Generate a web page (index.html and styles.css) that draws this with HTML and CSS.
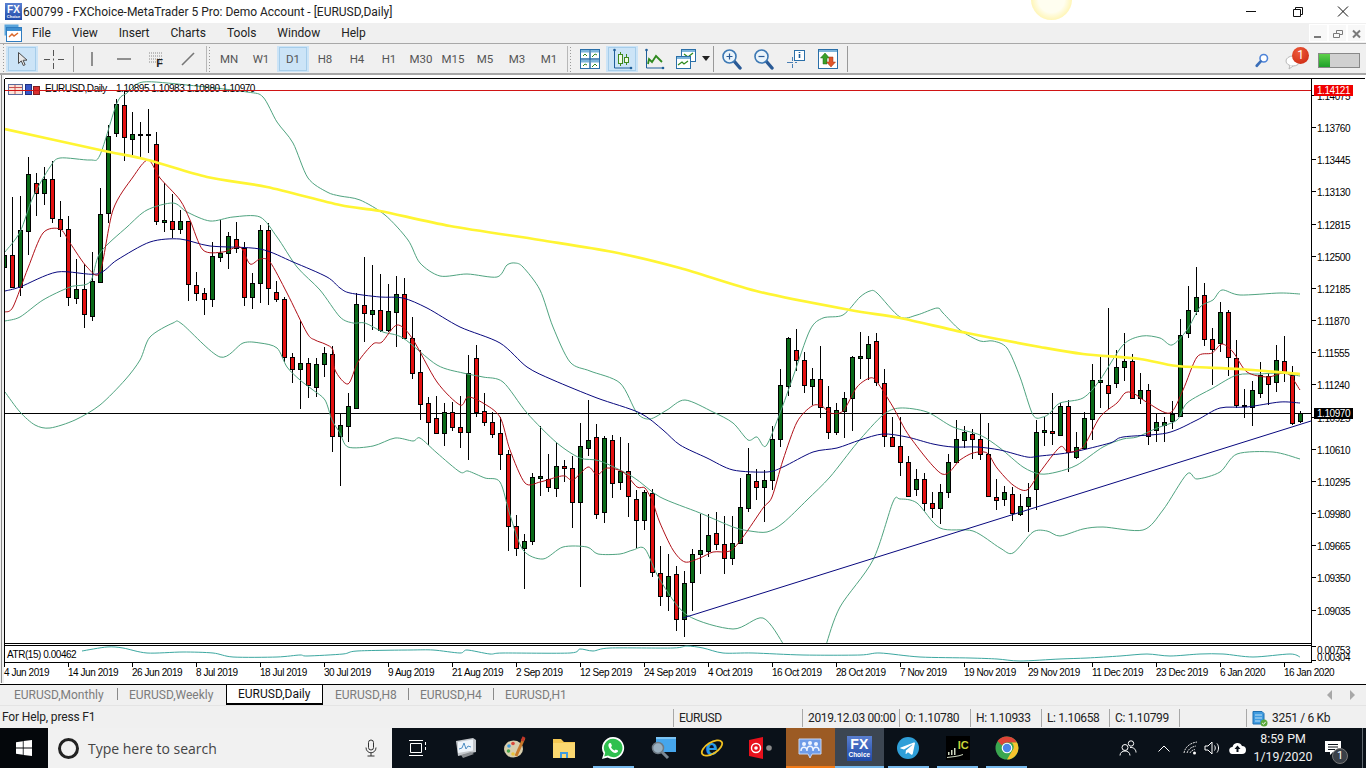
FILE: index.html
```html
<!DOCTYPE html>
<html lang="en">
<head>
<meta charset="utf-8">
<title>600799 - FXChoice-MetaTrader 5 Pro: Demo Account - [EURUSD,Daily]</title>
<link rel="stylesheet" href="styles.css">
</head>
<body>
<div class="app">
  <header class="titlebar">
    <span class="fx-badge small"><b>FX</b><i>Choice</i></span>
    <span class="title">600799 - FXChoice-MetaTrader 5 Pro: Demo Account - [EURUSD,Daily]</span>
    <span class="sun"></span>
    <div class="winctl">
      <svg width="46" height="22" viewBox="0 0 46 22"><path d="M18 10.500h10" stroke="#111" fill="none"/></svg>
      <svg width="46" height="22" viewBox="0 0 46 22"><path d="M19.500 8.500h7v7h-7zM21.500 8.500v-2h7v7h-2" stroke="#111" fill="none"/></svg>
      <svg width="46" height="22" viewBox="0 0 46 22"><path d="M18 5.500l10 10M28 5.500l-10 10" stroke="#111" fill="none"/></svg>
    </div>
  </header>

  <nav class="menubar">
    <svg class="appicon" width="18" height="18" viewBox="0 0 18 18"><rect x="0.5" y="0.5" width="14" height="11" fill="#5aa5dc"/><rect x="2.5" y="3.5" width="15" height="14" fill="#fff" stroke="#2f7cc0"/><rect x="3" y="4" width="14" height="3" fill="#3f8fd0"/><path d="M5 13l3-3 2 2 4-3" stroke="#d9672a" stroke-width="1.4" fill="none"/></svg>
    <span>File</span><span>View</span><span>Insert</span><span>Charts</span><span>Tools</span><span>Window</span><span>Help</span>
    <div class="mdi">
      <span class="mdibtn"><svg width="19" height="17" viewBox="0 0 19 17"><path d="M5 12h7" stroke="#7a7a7a" stroke-width="2"/></svg></span>
      <span class="mdibtn"><svg width="19" height="17" viewBox="0 0 19 17"><path d="M5.500 8.500h6v4h-6zM8.500 8V5.500h6v4h-2.500" stroke="#7a7a7a" fill="none"/></svg></span>
      <span class="mdibtn"><svg width="19" height="17" viewBox="0 0 19 17"><path d="M6 5.500l7 7M13 5.500l-7 7" stroke="#7a7a7a" stroke-width="2"/></svg></span>
    </div>
  </nav>

  <div class="toolbar">
    <button class="tbtn on"><svg width="16" height="18" viewBox="0 0 16 18"><path d="M4.500 2.500v11l2.800-2.600 2 4.600 1.800-.8-2-4.400 3.900-.2z" fill="#e8e8e8" stroke="#4a4a4a"/></svg></button>
    <button class="tbtn"><svg width="22" height="22" viewBox="0 0 22 22"><path d="M1 11.500h6M15 11.500h6M10.500 2v6M10.500 15v6M10.500 10.500v2" stroke="#555" fill="none"/></svg></button>
    <span class="sep"></span>
    <button class="tbtn"><svg width="6" height="16" viewBox="0 0 6 16"><path d="M3 1v14" stroke="#777" stroke-width="1.600"/></svg></button>
    <button class="tbtn"><svg width="16" height="6" viewBox="0 0 16 6"><path d="M1 3h14" stroke="#777" stroke-width="1.600"/></svg></button>
    <button class="tbtn grid-f"><svg width="14" height="11" viewBox="0 0 14 11"><path d="M0 1h14M0 4h14M0 7h14M0 10h14" stroke="#888" stroke-dasharray="1 1"/></svg><b>F</b></button>
    <button class="tbtn"><svg width="14" height="14" viewBox="0 0 14 14"><path d="M1 13L13 1" stroke="#777" stroke-width="1.600"/></svg></button>
    <span class="grip"></span>
    <button class="tbtn tf">MN</button><button class="tbtn tf">W1</button><button class="tbtn tf on">D1</button><button class="tbtn tf">H8</button><button class="tbtn tf">H4</button><button class="tbtn tf">H1</button><button class="tbtn tf">M30</button><button class="tbtn tf">M15</button><button class="tbtn tf">M5</button><button class="tbtn tf">M3</button><button class="tbtn tf">M1</button>
    <span class="grip"></span>
    <button class="tbtn"><svg width="20" height="20" viewBox="0 0 20 20"><rect x="0.500" y="0.500" width="19" height="19" fill="#fff" stroke="#2a6fa8"/><path d="M0 10h20M10 0v20" stroke="#2a6fa8" stroke-width="1.500"/><rect x="1" y="1" width="8" height="2.500" fill="#7fb6dc"/><rect x="11" y="1" width="8" height="2.500" fill="#7fb6dc"/><rect x="1" y="11" width="8" height="2.500" fill="#7fb6dc"/><rect x="11" y="11" width="8" height="2.500" fill="#7fb6dc"/><path d="M3 7l2-2 2 2M12 8l3-3 2 1M3 17l2-2 2 1M12 18l3-3 2 2" stroke="#2f8a1f" fill="none"/></svg></button>
    <button class="tbtn on"><svg width="22" height="24" viewBox="0 0 22 24"><path d="M3.500 3v18H20" stroke="#1f5f9a" fill="none"/><circle cx="3.500" cy="3" r="1.300" fill="#1f5f9a"/><circle cx="20" cy="21" r="1.300" fill="#1f5f9a"/><path d="M9.500 5v14M15.500 7v11" stroke="#3f8a1f"/><rect x="7.500" y="7.500" width="4" height="9" fill="#f4fbe8" stroke="#3f8a1f"/><rect x="13.500" y="10.500" width="4" height="5" fill="#f4fbe8" stroke="#3f8a1f"/></svg></button>
    <button class="tbtn"><svg width="22" height="24" viewBox="0 0 22 24"><path d="M3.500 3v18H20" stroke="#1f5f9a" fill="none"/><circle cx="3.500" cy="3" r="1.300" fill="#1f5f9a"/><circle cx="20" cy="21" r="1.300" fill="#1f5f9a"/><path d="M5 17l1-5 3 3 4-6 6 6" stroke="#2f8a1f" stroke-width="1.800" fill="none"/></svg></button>
    <button class="tbtn"><svg width="22" height="22" viewBox="0 0 22 22"><rect x="6.500" y="1.500" width="14" height="12" fill="#fff" stroke="#2a6fa8"/><rect x="7" y="2" width="13" height="2" fill="#7fb6dc"/><path d="M9 6l4 3 5-4" stroke="#2f8a1f" stroke-width="1.300" fill="none"/><rect x="1.500" y="8.500" width="14" height="12" fill="#fff" stroke="#2a6fa8"/><rect x="2" y="9" width="13" height="2" fill="#7fb6dc"/><path d="M3 17l4-3 2 2 4-3" stroke="#2f8a1f" stroke-width="1.300" fill="none"/></svg></button>
    <span class="dropdown"><svg width="8" height="5" viewBox="0 0 8 5"><path d="M0 0h8L4 5z" fill="#222"/></svg></span>
    <span class="sep"></span>
    <button class="tbtn"><svg width="22" height="22" viewBox="0 0 22 22"><path d="M13 13l6 7" stroke="#2a5a96" stroke-width="3.400" stroke-linecap="round"/><circle cx="8.500" cy="8.500" r="6.500" fill="#eaf4fb" stroke="#3c78b4" stroke-width="1.600"/><path d="M5.500 8.500h6M8.500 5.500v6" stroke="#2a5a96" stroke-width="1.200"/></svg></button>
    <button class="tbtn"><svg width="22" height="22" viewBox="0 0 22 22"><path d="M13 13l6 7" stroke="#2a5a96" stroke-width="3.400" stroke-linecap="round"/><circle cx="8.500" cy="8.500" r="6.500" fill="#eaf4fb" stroke="#3c78b4" stroke-width="1.600"/><path d="M5.500 8.500h6" stroke="#2a5a96" stroke-width="1.200"/></svg></button>
    <button class="tbtn"><svg width="20" height="20" viewBox="0 0 20 20"><rect x="8.500" y="1.500" width="10" height="10" fill="#fff" stroke="#2a6fa8"/><path d="M13.500 3v1M13.500 5v4" stroke="#1f5f9a" stroke-width="1.600"/><path d="M1 13.500h6M9 13.500h2M6.500 8v4M6.500 15v4" stroke="#4a7fb4"/></svg></button>
    <button class="tbtn"><svg width="20" height="20" viewBox="0 0 20 20"><rect x="0.500" y="0.500" width="19" height="19" fill="#fff" stroke="#2a6fa8"/><rect x="1" y="1" width="18" height="2" fill="#7fb6dc"/><path d="M7 4l-4.500 5H5v6h4V9h2.500z" fill="#3aa02a" stroke="#1f6a14" stroke-width=".5"/><path d="M13 18l4.500-5H15V8h-4v5H8.500z" fill="#e0562a" stroke="#a03414" stroke-width=".5"/></svg></button>
    <span class="sep sep-end"></span>
    <div class="tb-right">
      <svg class="finder" width="14" height="15" viewBox="0 0 16 17"><circle cx="10" cy="6" r="4.300" fill="#fff" stroke="#4f84d8" stroke-width="1.800"/><path d="M6.500 9.500L2 14.500" stroke="#3a6eb8" stroke-width="3" stroke-linecap="round"/></svg>
      <span class="msg">
        <svg width="18" height="16" viewBox="0 0 18 16"><ellipse cx="9" cy="7" rx="7" ry="5" fill="#fff" stroke="#b8b8b8"/><path d="M6 11l-1 4 4-3" fill="#fff" stroke="#b8b8b8"/></svg>
        <em>1</em>
      </span>
      <span class="conn"><span class="conn-fill"></span></span>
    </div>
  </div>

  <main class="chart"><svg id="chart" viewBox="0 75 1366 609" width="1366" height="609" role="img"></svg></main>

  <div class="tabs">
    <span class="tab">EURUSD,Monthly</span>
    <span class="tab">EURUSD,Weekly</span>
    <span class="tab active">EURUSD,Daily</span>
    <span class="tab">EURUSD,H8</span>
    <span class="tab">EURUSD,H4</span>
    <span class="tab">EURUSD,H1</span>
    <div class="tabnav">
      <svg width="6" height="10" viewBox="0 0 6 10"><path d="M5 0v10L0 5z" fill="#a8a8a8"/></svg>
      <svg width="6" height="10" viewBox="0 0 6 10"><path d="M1 0v10l5-5z" fill="#a8a8a8"/></svg>
    </div>
  </div>

  <div class="status">
    <span>For Help, press F1</span>
    <span>EURUSD</span>
    <span>2019.12.03 00:00</span>
    <span>O: 1.10780</span>
    <span>H: 1.10933</span>
    <span>L: 1.10658</span>
    <span>C: 1.10799</span>
    <span></span>
    <span class="traffic"><svg width="16" height="18" viewBox="0 0 16 18"><path d="M1 2.500h9l2 2V15H1z" fill="#3f9be0" stroke="#1f6fb0"/><path d="M3 6h7M3 9h7M3 12h5" stroke="#bfe0f6"/><circle cx="12" cy="14" r="3.500" fill="#5aa83a"/><path d="M10.200 14l1.300 1.300 2.200-2.500" stroke="#fff" fill="none"/></svg>3251 / 6 Kb</span>
  </div>

  <footer class="taskbar">
    <div class="start"><svg width="16" height="16" viewBox="0 0 16 16"><path d="M0 2.200l6.800-1v6.400H0zM7.600 1.100L16 0v7.600H7.600zM0 8.400h6.800v6.400L0 13.800zM7.600 8.400H16V16l-8.400-1.100z" fill="#fff"/></svg></div>
    <div class="search">
      <span class="ring"></span>
      <span class="placeholder">Type here to search</span>
      <svg class="mic" width="14" height="18" viewBox="0 0 14 18"><rect x="4.500" y="1" width="5" height="10" rx="2.500" fill="none" stroke="#333"/><path d="M2 8.500c0 7 10 7 10 0M7 14v3M3.500 17h7" fill="none" stroke="#333"/></svg>
    </div>
    <div class="tasks">
      <span class="ti"><svg width="20" height="18" viewBox="0 0 20 18"><path d="M3.500 4.500h11v9h-11zM2 1.500h14M2 16.500h14M18.500 3v3M18.500 8v3" stroke="#fff" fill="none"/></svg></span>
      <span class="ti"><svg width="24" height="24" viewBox="0 0 24 24"><path d="M2 5l17-3 3 2v12l-18 4z" fill="#c4c8cc"/><path d="M4 6l15-2.500v11L4 17z" fill="#eef4fa"/><path d="M5 13l3-1 2-5 2 6 2-3 3 1" stroke="#4f8fc4" fill="none"/><path d="M7 19l10-3 3 2-11 4z" fill="#8a8e92"/></svg></span>
      <span class="ti"><svg width="24" height="24" viewBox="0 0 24 24"><ellipse cx="10.500" cy="13" rx="9.500" ry="8.500" fill="#d8cfae"/><circle cx="6" cy="10" r="1.800" fill="#3f9be0"/><circle cx="10" cy="7.500" r="1.800" fill="#d9463a"/><circle cx="5.500" cy="15" r="1.800" fill="#4aa64a"/><circle cx="10" cy="18" r="1.800" fill="#e8c33a"/><path d="M21 2L13 20" stroke="#c87a2a" stroke-width="3"/><path d="M21 1l-2 4" stroke="#c0362a" stroke-width="3"/></svg></span>
      <span class="ti"><svg width="24" height="22" viewBox="0 0 24 22"><path d="M1 2h8l3 3h11v16H1z" fill="#f4c752"/><path d="M1 6h22v15H1z" fill="#fbd870"/><path d="M8 15h8v6H8z" fill="#3f9be0"/><rect x="10" y="17" width="4" height="4" fill="#fbd870"/></svg></span>
      <span class="ti under"><svg width="24" height="24" viewBox="0 0 24 24"><path d="M12 1a11 11 0 0 0-9.400 16.600L1 23l5.600-1.500A11 11 0 1 0 12 1z" fill="#fff"/><path d="M12 2.800a9.200 9.200 0 0 0-7.800 14l-1 3.800 3.900-1A9.200 9.200 0 1 0 12 2.800z" fill="#2fc04f"/><path d="M8.500 7c-1.500 1-1.500 3 0 5.500s4 4.500 6 4.500c2 0 2.800-1.800 2.500-2.400l-2.300-1.200-1 1.200c-1.500-.5-3-2-3.700-3.600l1-1.100L10 7.200z" fill="#fff"/></svg></span>
      <span class="ti"><svg width="26" height="24" viewBox="0 0 26 24"><path d="M6 1h20v15H6z" fill="#46a6ec"/><path d="M6 1h20v2H6z" fill="#7cc4f4"/><circle cx="8" cy="12" r="5.500" fill="#9ab0c0" stroke="#6e7a84" stroke-width="1.500"/><path d="M12 16l6 6" stroke="#7a8894" stroke-width="3"/></svg></span>
      <span class="ti ie"><span class="ie-e">e</span><svg width="24" height="24" viewBox="0 0 24 24"><ellipse cx="12" cy="12" rx="11.500" ry="5.500" transform="rotate(-32 12 12)" fill="none" stroke="#f0c020" stroke-width="1.800"/></svg></span>
      <span class="ti"><svg width="26" height="24" viewBox="0 0 26 24"><path d="M1 4l14-3v22L1 20z" fill="#e8101c"/><circle cx="8" cy="12" r="4.500" fill="none" stroke="#fff" stroke-width="1.400"/><circle cx="8" cy="12" r="1.800" fill="#fff"/><circle cx="21" cy="12" r="2.800" fill="#8a8a8a"/></svg></span>
      <span class="ti ti-orange"><svg width="24" height="24" viewBox="0 0 24 24"><path d="M1 3h22v15H14l-2 4-2-4H1z" fill="#6f9ce8" stroke="#c8d8f4"/><circle cx="6" cy="8" r="2" fill="#eef4ff"/><circle cx="12" cy="7" r="2" fill="#eef4ff"/><circle cx="18" cy="8" r="2" fill="#eef4ff"/><path d="M3 15c0-5 6-5 6 0M9 14c0-5 6-5 6 0M15 15c0-5 6-5 6 0" fill="none" stroke="#eef4ff" stroke-width="1.500"/></svg></span>
      <span class="ti ti-fx"><span class="fx-badge big"><b>FX</b><i>Choice</i></span></span>
      <span class="ti ti-under2"><svg width="24" height="24" viewBox="0 0 24 24"><circle cx="12" cy="12" r="11" fill="#2f9fd8"/><path d="M4.800 11.600l13-5c.8-.3 1.300.2 1.100 1.100l-2.200 10.400c-.2.800-.7.900-1.300.6l-3.400-2.500-1.700 1.600c-.2.200-.4.300-.7.300l.3-3.500 6.300-5.700c.3-.3 0-.4-.4-.2l-7.800 4.900-3.300-1c-.7-.2-.7-.7.100-1z" fill="#fff"/></svg></span>
      <span class="ti ti-under2"><span class="ic"><svg width="16" height="12" viewBox="0 0 16 12"><path d="M1 9h1.500V6H1zM4 9h1.500V4H4zM7 9h1.500V2H7zM0 11c5-1 11-1 16-3v1c-5 2-11 2-16 3z" fill="#cfd8c0"/></svg><b>IC</b></span></span>
      <span class="ti ti-under2"><svg width="24" height="24" viewBox="0 0 24 24"><circle cx="12" cy="12" r="11.500" fill="#3aa650"/><path d="M12 .5A11.500 11.500 0 0 1 22 6.500H12a5.500 5.500 0 0 0-5 3L2.500 5A11.500 11.500 0 0 1 12 .5z" fill="#de4437"/><path d="M22 6.500A11.500 11.500 0 0 1 12 23.500l5-8.500a5.500 5.500 0 0 0-.5-8.500z" fill="#f7c42e"/><circle cx="12" cy="12" r="5.300" fill="#fff"/><circle cx="12" cy="12" r="4.200" fill="#4a86e8"/></svg></span>
    </div>
    <div class="tray">
      <span class="t-person"><svg width="18" height="16" viewBox="0 0 18 16"><circle cx="6" cy="7.500" r="3" fill="none" stroke="#fff"/><path d="M1 15.500c0-6 10-6 10 0" fill="none" stroke="#fff"/><circle cx="12" cy="3.500" r="2.700" fill="none" stroke="#fff"/><path d="M11 7.500c3-.5 6 1.500 6 5" fill="none" stroke="#fff"/></svg></span>
      <span class="t-chev"><svg width="12" height="7" viewBox="0 0 12 7"><path d="M.5 6.500L6 1l5.500 5.500" fill="none" stroke="#fff"/></svg></span>
      <span class="t-wifi"><svg width="15" height="14" viewBox="0 0 15 14"><path d="M1 12C2 6 7 2 14 1M4 12c1-3.500 4-6 9-7M7 12c.6-1.500 2-3 5-3.500" stroke="#e0e0e0" fill="none" stroke-dasharray="2 .8"/><circle cx="11.500" cy="12" r="1.500" fill="#fff"/></svg></span>
      <span class="t-vol"><svg width="16" height="14" viewBox="0 0 16 14"><path d="M1 5h3l4-4v12L4 9H1z" fill="none" stroke="#fff"/><path d="M10.500 4.500c1 1.500 1 3.500 0 5M13 2.500c2 2.500 2 6.500 0 9" fill="none" stroke="#fff"/></svg></span>
      <span class="t-cloud"><svg width="17" height="12" viewBox="0 0 17 12"><path d="M4 12a3.500 3.500 0 0 1-.5-7A5 5 0 0 1 13 4a4 4 0 0 1 0 8z" fill="#fff"/><path d="M8.500 3.500L5.500 7H7.500v3h2V7h2z" fill="#0a1119"/></svg></span>
      <span class="clock"><span>8:59 PM</span><span>1/19/2020</span></span>
      <span class="t-note"><svg width="18" height="16" viewBox="0 0 18 16"><path d="M1 1h16v11H9l-3 3v-3H1z" fill="#fff"/><path d="M4 4.500h10M4 7h10M4 9.500h7" stroke="#0a1119"/></svg><em>1</em></span>
      <span class="t-edge"></span>
    </div>
  </footer>
</div>
<script src="chart.js"></script>
</body>
</html>
```

FILE: styles.css
```css
* { box-sizing: border-box; }
html, body { margin: 0; padding: 0; }
body { width: 1366px; height: 768px; overflow: hidden; background: #fff; font-family: Roboto, "Liberation Sans", sans-serif; }
.app { display: flex; flex-direction: column; width: 1366px; height: 768px; }
button { font: inherit; border: 0; background: none; padding: 0; margin: 0; }

/* title bar */
.titlebar { position: relative; display: flex; align-items: center; height: 23px; padding-left: 5px; background: #fff; color: #222; font-size: 12px; }
.title { margin-left: 1px; }
.fx-badge { display: inline-flex; flex-direction: column; align-items: center; justify-content: center; background: linear-gradient(#5a7fd0, #1f4aa8); color: #fff; line-height: 1; }
.fx-badge b { font-family: "Liberation Sans", sans-serif; font-weight: 700; }
.fx-badge i { font-style: normal; font-family: "Liberation Sans", sans-serif; font-weight: 700; }
.fx-badge.small { width: 17px; height: 17px; }
.fx-badge.small b { font-size: 10px; }
.fx-badge.small i { font-size: 4px; }
.fx-badge.big { width: 25px; height: 25px; }
.fx-badge.big b { font-size: 14px; }
.fx-badge.big i { font-size: 6.500px; margin-top: 1px; }
.sun { position: absolute; left: 1031px; top: -21px; width: 41px; height: 41px; border-radius: 50%; background: radial-gradient(circle, #fffef0 0 45%, #fff4ad 75%, #f2dc80 100%); }
.winctl { display: flex; margin-left: auto; margin-right: 0; }
.winctl svg { display: block; }

/* menu */
.menubar { display: flex; align-items: center; gap: 21px; padding-left: 4px; background: #f0f0f0; color: #222; font-size: 12px; border-bottom: 1px solid #a8a8a8; height: 21px; }
.appicon { margin-right: -11px; }
.mdi { display: flex; gap: 0; margin-left: auto; align-self: flex-start; padding-top: 1px; }
.mdibtn { display: block; width: 19px; height: 18px; background: #f8f8f8; border: 1px solid #fff; }
.mdibtn svg { display: block; margin: 0 -1px; }

/* toolbar */
.toolbar { display: flex; align-items: center; height: 31px; padding-left: 6px; background: #f0f0f0 radial-gradient(circle, #9a9a9a 0 .8px, transparent 1px) 2px 2px/3px 3px repeat-y; border-bottom: 2px solid #a8a8a8; }
.tbtn { display: flex; align-items: center; justify-content: center; width: 32px; height: 26px; flex: none; color: #555; font-size: 11.500px; background-clip: padding-box; border: 1px solid transparent; border-left-width: 2px; border-right-width: 2px; position: relative; }
.tbtn.on { background: #cce4f7; box-shadow: inset 0 0 0 1px #a6cdea; }
.grid-f { flex-direction: column; }
.grid-f svg { margin-top: -2px; }
.grid-f b { position: absolute; right: 7px; bottom: 2px; font: 700 11px "Liberation Sans", sans-serif; color: #222; }
.sep { width: 6px; height: 26px; flex: none; background: linear-gradient(#999, #999) center/1px 100% no-repeat; }
.sep-end { width: 4px; background-position: 3px 0; }
.grip { position: relative; width: 9px; height: 26px; flex: none; background: radial-gradient(circle, #9a9a9a 0 .8px, transparent 1px) 4px 0/3px 3px repeat-y; }
.grip::before { content: ""; position: absolute; left: 2px; top: 0; width: 1px; height: 100%; background: #b8b8b8; }
.dropdown { display: flex; align-items: center; justify-content: center; width: 8px; flex: none; }
.tb-right { display: flex; align-items: center; margin-left: auto; padding-right: 6px; padding-top: 3px; }
.finder { margin-right: 15px; }
.msg { position: relative; display: block; width: 22px; height: 18px; margin-right: 12px; }
.msg svg { position: absolute; left: 0; top: 3px; }
.msg em { position: absolute; left: 8px; top: -4px; width: 17px; height: 17px; border-radius: 50%; background: radial-gradient(circle at 40% 30%, #ee5a3a, #c9240e); color: #fff; font: normal 12px/17px Roboto, sans-serif; text-align: center; }
.conn { display: block; width: 42px; height: 15px; background: #d0d0d0; border: 1px solid #888; }
.conn-fill { display: block; width: 11px; height: 100%; background: linear-gradient(#5ed04a, #1fa02a); }

/* chart */
.chart { flex: none; height: 609px; display: block; background: #fff; }
#chart { display: block; font-family: "Liberation Sans", sans-serif; font-size: 10px; letter-spacing: -.45px; }
#chart text { fill: #000; }
#chart .lbl-inv { fill: #fff; }
.candles-wick { stroke: #000; fill: none; shape-rendering: crispEdges; }
.c-green { fill: #0a6a18; stroke: #000; shape-rendering: crispEdges; }
.c-red { fill: #e31010; stroke: #000; shape-rendering: crispEdges; }
.l-band { stroke: #4fa37f; fill: none; }
.l-blue { stroke: #08087e; fill: none; }
.l-red { stroke: #b01018; fill: none; }
.l-yellow { stroke: #fff533; fill: none; stroke-width: 2.700; }
.l-atr { stroke: #3ca7a0; fill: none; }
.l-axis { stroke: #000; fill: none; shape-rendering: crispEdges; }
.l-bar { stroke: #8a8a8a; fill: none; shape-rendering: crispEdges; }
.l-hred { stroke: #d01414; fill: none; shape-rendering: crispEdges; }

/* tabs */
.tabs { display: flex; align-items: stretch; height: 21px; padding-left: 2px; background: #f0f0f0; border-top: 1px solid #000; font-size: 12px; color: #7c7c7c; }
.tab { position: relative; padding: 2px 12px 0; line-height: 16px; white-space: nowrap; }
.tab + .tab::before { content: ""; position: absolute; left: 0; top: 3px; bottom: 5px; width: 1px; background: #8a8a8a; }
.tab:nth-child(1) { width: 115px; }
.tab:nth-child(2) { width: 109px; }
.tab:nth-child(3) { width: 97px; }
.tab:nth-child(4), .tab:nth-child(5) { width: 85px; }
.tab.active { color: #111; background: #fff; border: 1px solid #000; border-top: 0; border-bottom-width: 2px; padding: 1px 11px 0; height: 20px; }
.tab.active::before, .tab.active + .tab::before { display: none; }
.tabnav { display: flex; align-items: center; gap: 16px; margin-left: auto; padding-right: 11px; }

/* status */
.status { display: grid; grid-template-columns: 673px 129px 97px 71px 71px 68px 70px 67px 1fr; height: 23px; background: #f0f0f0; font-size: 12px; letter-spacing: -.35px; color: #222; border-top: 1px solid #e4e4e4; }
.status span { display: flex; align-items: center; padding-left: 5px; white-space: nowrap; overflow: hidden; }
.status span:first-child { padding-left: 2px; letter-spacing: -.15px; }
.status span + span { border-left: 1px solid #a8a8a8; margin: 3px 0 1px; }
.traffic svg { margin-right: 4px; }

/* taskbar */
.taskbar { display: flex; height: 40px; background: #0a1119; color: #fff; }
.start { display: flex; align-items: center; justify-content: center; width: 48px; flex: none; background: #04070b; }
.search { display: flex; align-items: center; width: 344px; flex: none; background: #f1f1f1; color: #444; padding-left: 10px; }
.ring { width: 21px; height: 21px; border: 3.500px solid #222; border-radius: 50%; flex: none; }
.placeholder { margin-left: 9px; font-family: "Open Sans", Roboto, sans-serif; font-size: 14px; }
.mic { margin-left: auto; margin-right: 14px; }
.tasks { display: flex; flex: none; }
.ti { position: relative; display: flex; align-items: center; justify-content: center; width: 49.200px; height: 40px; flex: none; }
.ti-orange { background: #9c5b24; }
.ti-fx { background: #3c4652; }
.under::after, .ti-orange::after, .ti-fx::after, .ti-under2::after { content: ""; position: absolute; left: 4px; right: 4px; bottom: 0; height: 2px; background: #76b9ed; }
.ti-orange::after { left: 0; right: 0; background: #f07a18; }
.ti-fx::after { left: 0; right: 0; }
.ie svg { position: relative; }
.ie-e { position: absolute; left: 0; right: 0; top: 8px; font: 700 22px/24px "Liberation Sans", sans-serif; color: #2a9be8; text-align: center; }
.ic { position: relative; display: flex; align-items: flex-end; width: 24px; height: 24px; background: #000; padding: 0 1px 2px; }
.ic b { position: absolute; right: 1px; top: 3px; font: 700 11px "Liberation Sans", sans-serif; color: #c9d23a; }
.tray { display: flex; align-items: center; margin-left: auto; width: 256px; flex: none; }
.tray > span { display: flex; align-items: center; justify-content: center; flex: none; }
.t-person, .t-chev { width: 36px; }
.t-wifi { width: 16px; }
.t-vol { width: 28px; }
.t-cloud { width: 22px; }
.clock { flex-direction: column; width: 70px; font-size: 12.400px; line-height: 18px; color: #f0f0f0; }
.t-note { position: relative; width: 30px; height: 40px; }
.t-note em { position: absolute; left: 14px; top: 20px; width: 16px; height: 16px; border-radius: 50%; background: #3a4048; border: 1px solid #777; color: #fff; font: normal 11px/14px Roboto, sans-serif; text-align: center; }
.t-edge { width: 1px; height: 40px; margin-left: 14px; background: #606870; }
```

FILE: chart.js
```js
// [colour, high, bodyTop, bodyBottom, low] - one candle every 8px starting at x=4.5
const G = 1, R = 0;
const candles = [
[G,255,255,267,268],[R,197,255,287,288],[G,196,230,287,296],[G,157,174,231,255],[R,173,183,193,216],[G,167,179,193,205],[R,161,179,218,223],[R,201,219,229,237],[R,216,229,297,306],[G,259,289,298,304],[R,264,289,314,328],[G,252,281,316,321],[G,188,214,282,282],[G,125,136,213,223],[G,99,104,133,137],[R,91,105,137,161],[G,112,134,139,155],[G,122,134,135,157],[G,109,134,135,153],[R,132,144,221,225],[G,183,220,222,232],[R,194,221,229,238],[G,210,221,229,234],[R,221,221,284,301],[R,272,285,293,301],[R,288,293,299,315],[G,242,256,299,307],[G,220,253,257,262],[G,232,236,253,269],[R,222,239,248,253],[R,242,248,297,306],[G,273,283,297,309],[G,225,230,283,303],[R,223,230,288,305],[R,281,292,299,302],[R,297,299,357,362],
[R,353,357,369,383],[G,320,363,369,409],[R,358,363,385,398],[G,358,364,387,397],[G,347,353,364,377],[R,346,354,436,452],[G,414,425,436,486],
[G,393,406,426,442],[G,293,304,408,408],[R,257,305,313,342],[G,265,310,314,330],[R,274,310,330,332],[G,284,311,330,332],[G,276,294,312,347],[R,278,294,338,338],[R,317,338,373,379],[R,350,372,404,420],[R,397,403,422,445],[R,396,418,433,434],[G,403,412,433,446],[R,402,412,427,431],[R,396,427,432,448],[G,355,373,432,460],[R,345,358,412,417],[R,393,411,422,426],[R,412,422,434,438],[R,417,433,454,470],
[R,450,454,526,551],[R,515,526,548,556],[G,534,541,548,589],[G,473,477,541,545],[G,426,476,478,496],[R,454,479,487,492],[G,442,466,488,497],[R,460,466,468,482],[R,456,468,502,528],[G,423,446,502,587],[G,400,440,448,456],[R,424,437,514,519],[G,436,438,512,523],[R,435,440,483,498],[G,437,471,482,490],[R,443,471,496,517],[R,490,499,520,548],[G,490,492,520,530],[R,489,493,572,577],[R,546,573,596,606],[G,554,576,596,611],[R,566,574,619,631],[G,571,583,619,637],[G,549,554,582,611],[G,514,550,554,574],[G,514,535,551,557],[R,512,533,544,550],[R,516,544,558,574],[G,516,543,558,565],[G,478,507,543,544],[G,448,474,508,512],[R,469,481,487,500],[G,470,480,487,522],[G,426,439,480,490],
[G,369,385,439,447],[G,337,338,386,396],[R,329,350,360,371],[R,352,360,385,393],[G,368,379,386,405],[R,346,379,407,418],[R,386,407,432,439],[G,403,410,432,435],[G,392,398,411,438],[G,356,357,398,431],[G,332,356,358,379],[G,336,344,358,380],[R,333,341,382,386],[R,369,383,436,447],[R,417,437,446,447],[R,417,446,462,476],[R,456,462,496,496],[G,469,479,489,496],[R,473,479,503,511],[R,492,503,508,518],[G,484,492,508,524],[G,454,462,492,498],[G,420,439,462,462],[G,426,432,440,448],[R,429,434,439,459],[R,413,439,454,460],[R,423,454,496,497],[R,479,497,500,510],[G,486,492,499,506],[R,487,494,513,521],[G,494,506,514,516],[G,483,497,506,532],[G,420,432,489,510],[G,417,430,432,446],[R,393,431,433,445],
[G,403,406,435,435],[R,400,406,452,472],[G,432,447,457,459],[G,412,418,448,449],[G,364,380,419,440],[G,357,380,382,408],[R,308,385,393,409],[G,350,367,383,388],[G,333,361,367,381],[R,354,361,398,399],[G,373,390,398,404],[R,384,390,436,445],[G,414,422,430,442],[G,417,422,425,442],[G,401,414,421,429],[G,319,335,416,416],[G,286,310,333,338],[G,267,297,311,315],[R,283,295,339,346],[R,328,339,349,385],[G,302,312,343,352],[R,310,312,357,376],[R,340,358,405,408],[G,389,405,406,418],[G,381,390,407,426],[G,362,375,393,398],[R,373,376,384,405],[G,345,360,382,392],[R,336,361,373,382],[R,366,375,423,425],[G,411,413,421,423]
];

const bandUpper = [5,252,20,232,33,197,50,167,60,158,90,160,100,155,117,103,127,93,143,82,187,85,247,92,263,97,277,122,293,143,308,178,327,192,340,196,360,200,385,215,408,240,420,263,440,276,467,274,497,277,507,265,515,263,523,267,540,290,553,327,570,362,590,371,620,383,637,413,650,419,667,410,685,400,713,412,733,423,748,440,757,437,766,446,780,413,793,377,810,330,823,318,843,315,860,297,870,291,877,293,900,317,917,315,937,308,943,313,960,330,980,341,993,341,1007,348,1020,377,1033,415,1043,417,1050,413,1060,403,1083,398,1100,380,1123,345,1142,336,1160,338,1172,345,1187,330,1200,307,1213,300,1222,290,1240,295,1280,293,1300,294];
const bandMiddle = [5,321,20,317,43,300,70,287,90,282,100,253,127,227,147,210,173,203,187,212,210,221,233,217,260,217,277,237,297,267,320,290,340,317,353,323,365,323,383,332,403,338,437,365,463,373,483,377,503,382,527,413,557,443,580,458,600,461,633,477,660,497,700,513,733,527,750,531,767,532,783,523,807,500,830,477,857,443,883,415,900,408,927,412,953,427,980,435,1000,448,1023,467,1040,474,1057,472,1077,465,1103,447,1123,439,1137,437,1157,428,1177,420,1187,403,1213,388,1237,375,1260,374,1280,373,1300,376];
const bandLower = [5,392,20,412,35,425,50,428,75,420,100,405,125,380,140,360,150,337,173,323,182,324,220,357,243,343,260,343,277,348,287,367,300,380,313,390,325,400,332,420,340,433,348,447,373,446,395,438,413,441,420,438,437,453,460,472,468,471,485,478,500,482,510,515,523,550,543,559,563,547,587,547,598,554,620,554,633,550,645,549,660,580,687,615,733,629,763,618,784,645];
const bandLower2 = [826,645,840,607,873,560,893,502,900,499,917,503,940,528,973,531,1000,548,1013,553,1033,532,1047,531,1060,536,1083,529,1103,527,1143,530,1163,510,1187,474,1197,479,1220,472,1237,454,1273,452,1300,459];
const blueMA = [5,291,20,287,57,272,97,274,117,260,150,242,180,239,210,246,260,249,293,262,327,277,340,288,350,293,380,297,403,298,427,308,460,327,500,343,527,367,553,380,597,398,640,413,663,430,680,445,707,458,733,470,767,472,783,467,813,452,837,448,860,440,883,434,907,437,933,444,953,447,977,447,1000,450,1027,457,1040,456,1073,452,1110,443,1123,437,1167,433,1197,420,1220,408,1247,407,1280,402,1300,403];
const redMA = [5,312,13,307,28,268,43,233,60,229,70,243,87,267,100,272,113,210,133,177,148,160,160,178,180,200,190,220,203,250,223,252,240,247,250,264,260,259,270,262,287,293,307,333,315,340,325,344,333,350,335,370,348,384,358,362,373,344,382,342,397,325,412,338,437,382,460,405,468,397,483,403,500,417,510,450,525,483,540,482,557,477,565,476,573,480,588,467,597,475,607,468,623,472,637,487,645,488,653,503,660,523,673,550,685,562,700,558,713,552,730,551,743,537,763,508,772,497,783,460,797,422,812,406,822,406,830,413,843,411,857,387,870,378,877,382,893,407,910,437,942,474,960,460,973,453,987,453,997,468,1013,485,1027,490,1040,472,1060,447,1068,452,1083,447,1100,417,1117,403,1125,393,1133,393,1148,403,1170,413,1183,390,1197,357,1212,353,1222,344,1233,352,1247,372,1268,377,1287,373,1300,390];
const yellowMA = [5,129,100,150,148,160,207,177,267,187,340,205,380,211,450,226,540,240,613,252,680,268,760,292,850,310,900,318,967,333,1040,347,1083,354,1140,359,1177,366,1240,369,1300,374];
const atr = [82,651,107,647,123,648,147,653,183,652,213,653,233,657,277,657,300,655,307,656,343,654,357,651,410,650,433,650,460,653,467,650,490,654,503,653,570,653,580,649,593,651,610,648,673,648,687,646,703,648,723,653,753,653,803,655,860,655,880,653,920,657,970,658,997,659,1020,661,1060,659,1087,658,1120,656,1147,654,1170,656,1200,654,1223,654,1253,657,1290,654,1300,657];

const prices = [[96,"1.14075"],[128,"1.13760"],[160,"1.13445"],[192,"1.13130"],[225,"1.12815"],[257,"1.12500"],[289,"1.12185"],[321,"1.11870"],[353,"1.11555"],[385,"1.11240"],[418,"1.10925"],[450,"1.10610"],[482,"1.10295"],[514,"1.09980"],[546,"1.09665"],[578,"1.09350"],[611,"1.09035"]];
const dates = ["4 Jun 2019","14 Jun 2019","26 Jun 2019","8 Jul 2019","18 Jul 2019","30 Jul 2019","9 Aug 2019","21 Aug 2019","2 Sep 2019","12 Sep 2019","24 Sep 2019","4 Oct 2019","16 Oct 2019","28 Oct 2019","7 Nov 2019","19 Nov 2019","29 Nov 2019","11 Dec 2019","23 Dec 2019","6 Jan 2020","16 Jan 2020"];

// Catmull-Rom through the sampled points, so the moving averages read as curves
const curve = (p, cls) => {
  const n = p.length / 2;
  const X = i => p[2 * Math.max(0, Math.min(n - 1, i))];
  const Y = i => p[2 * Math.max(0, Math.min(n - 1, i)) + 1];
  let d = `M${X(0)} ${Y(0)}`;
  for (let i = 0; i < n - 1; i++) {
    const c1x = X(i) + (X(i + 1) - X(i - 1)) / 7, c1y = Y(i) + (Y(i + 1) - Y(i - 1)) / 7;
    const c2x = X(i + 1) - (X(i + 2) - X(i)) / 7, c2y = Y(i + 1) - (Y(i + 2) - Y(i)) / 7;
    d += `C${c1x.toFixed(1)} ${c1y.toFixed(1)} ${c2x.toFixed(1)} ${c2y.toFixed(1)} ${X(i + 1)} ${Y(i + 1)}`;
  }
  return `<path class="${cls}" d="${d}"/>`;
};

let out = "";
// window edge and pane frames
out += `<rect x="0" y="75" width="1366" height="609" fill="#fff"/>`;
out += `<rect x="0" y="75" width="4" height="608" fill="#f0f0f0"/>`;
out += `<path class="l-bar" d="M1.500 75V683"/>`;
out += `<path class="l-axis" d="M4.500 78.500H1365M4.500 78.500V662.500M4.500 643.500H1311.500M4.500 645.500H1311.500M4.500 662.500H1311.500M1311.500 78.500V662.500"/>`;

// wicks and bodies
let wicks = "";
let bodies = "";
candles.forEach((c, i) => {
  const x = 4.5 + 8 * i;
  wicks += `M${x} ${c[1]}V${c[4]}`;
  const h = Math.max(c[3] - c[2], 1);
  bodies += `<rect class="${c[0] ? "c-green" : "c-red"}" x="${x - 2}" y="${c[2] + 0.5}" width="4" height="${h}"/>`;
});

// clip everything drawn on the main pane
out += `<defs><clipPath id="pane"><rect x="5" y="79" width="1306" height="564"/></clipPath></defs>`;
out += `<g clip-path="url(#pane)">`;
out += `<path class="l-axis" d="M5 413.500H1311"/>`;
out += `<path class="candles-wick" d="${wicks}"/>` + bodies;
out += curve(bandUpper, "l-band") + curve(bandMiddle, "l-band") + curve(bandLower, "l-band") + curve(bandLower2, "l-band");
out += curve(blueMA, "l-blue") + curve(redMA, "l-red") + curve(yellowMA, "l-yellow");
out += `<path class="l-blue" d="M683 618L1311 421"/>`;
out += `</g>`;

// legend (sits under the red price line)
out += `<g><rect x="8.500" y="84.500" width="14" height="10" fill="#fbe3d8" stroke="#5a6a9a"/><path d="M9 87.500h13M9 90.500h13M15 85v9" stroke="#c85050"/><rect x="25.500" y="84.500" width="6" height="10" fill="#3858c8" stroke="#203080"/><rect x="33.500" y="86.500" width="6" height="8" fill="#d83030" stroke="#802020"/></g>`;
out += `<text x="45" y="91.500">EURUSD,Daily</text><text x="116" y="91.500">1.10895 1.10983 1.10880 1.10970</text>`;
out += `<path class="l-hred" d="M5 90.500H1311"/>`;

// price scale
let ticks = "";
prices.forEach(p => {
  ticks += `M1311.500 ${p[0] - 0.5}H1316`;
  out += `<text x="1317" y="${p[0] + 3.5}">${p[1]}</text>`;
});
out += `<path class="l-axis" d="${ticks}"/>`;
out += `<rect x="1314" y="85" width="39" height="11" fill="#f00000"/><text class="lbl-inv" x="1317" y="94">1.14121</text>`;
out += `<rect x="1314" y="408" width="39" height="11" fill="#000"/><text class="lbl-inv" x="1317" y="417">1.10970</text>`;

// ATR pane
out += curve(atr, "l-atr");
out += `<text x="7" y="658">ATR(15) 0.00462</text>`;
out += `<path class="l-axis" d="M1311.500 646.500H1316M1311.500 660.500H1316"/>`;
out += `<text x="1317" y="654">0.00753</text><text x="1317" y="660.500">0.00304</text>`;

// time axis
let dticks = "";
dates.forEach((d, i) => {
  const x = 4.5 + 64 * i;
  dticks += `M${x} 662.500V667`;
  out += `<text x="${x - 0.5}" y="675.500">${d}</text>`;
});
out += `<path class="l-axis" d="${dticks}"/>`;

document.getElementById("chart").innerHTML = out;
```
